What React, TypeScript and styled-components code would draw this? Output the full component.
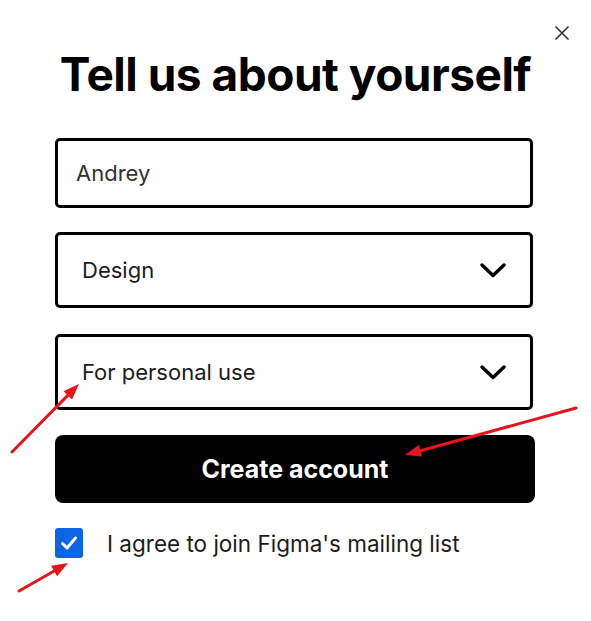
import React, { useState } from 'react';
import styled, { createGlobalStyle } from 'styled-components';

const GlobalStyle = createGlobalStyle`
  html, body {
    margin: 0;
    padding: 0;
    background: #ffffff;
  }
  body {
    font-family: Inter, "Liberation Sans", sans-serif;
    color: #000;
  }
`;

const Page = styled.div`
  position: relative;
  width: 591px;
  height: 621px;
  overflow: hidden;
  background: #fff;
`;

const Dialog = styled.div`
  display: flex;
  flex-direction: column;
  align-items: center;
  padding-top: 22px;
`;

const TopBar = styled.div`
  align-self: stretch;
  display: flex;
  justify-content: flex-end;
  padding-right: 18px;
  height: 22px;
`;

const CloseButton = styled.button`
  width: 22px;
  height: 22px;
  padding: 0;
  border: none;
  background: transparent;
  display: flex;
  align-items: center;
  justify-content: center;
  cursor: pointer;
`;

const Title = styled.h1`
  margin: 2px 0 0;
  font-size: 46px;
  line-height: 56px;
  font-weight: 700;
  letter-spacing: -0.5px;
  color: #000;
`;

const Form = styled.form`
  width: 478px;
  margin: 36px 3px 0 0;
  display: flex;
  flex-direction: column;
`;

const Field = styled.div<{ $height: number; $gap: number }>`
  box-sizing: border-box;
  height: ${(p) => p.$height}px;
  margin-top: ${(p) => p.$gap}px;
  border: 3px solid #000;
  border-radius: 5px;
  display: flex;
  align-items: center;
  justify-content: space-between;
  padding: 0 24px 0 ${(p) => (p.$height > 72 ? 24 : 18)}px;
`;

const FieldText = styled.span<{ $dark?: boolean }>`
  font-size: 22px;
  color: ${(p) => (p.$dark ? '#1c1c1c' : '#333333')};
`;

const SubmitButton = styled.button`
  margin-top: 25px;
  height: 68px;
  width: 480px;
  border: none;
  border-radius: 8px;
  background: #000;
  color: #fff;
  font-family: Inter, "Liberation Sans", sans-serif;
  font-size: 25px;
  font-weight: 700;
  cursor: pointer;
`;

const CheckRow = styled.label`
  margin-top: 25px;
  display: flex;
  align-items: center;
  gap: 24px;
  cursor: pointer;
`;

const CheckBox = styled.span<{ $checked: boolean }>`
  width: 28px;
  height: 30px;
  border-radius: 3px;
  background: ${(p) => (p.$checked ? '#0c66e4' : '#fff')};
  border: ${(p) => (p.$checked ? 'none' : '2px solid #000')};
  display: flex;
  align-items: center;
  justify-content: center;
`;

const CheckLabel = styled.span`
  font-size: 22.5px;
  color: #1c1c1c;
`;

const Annotations = styled.svg`
  position: absolute;
  left: 0;
  top: 0;
  pointer-events: none;
`;

const Chevron = () => (
  <svg width="26" height="15" viewBox="0 0 26 15">
    <path d="M2 2 L13 12.5 L24 2" fill="none" stroke="#000" strokeWidth="3.4" strokeLinecap="round" strokeLinejoin="round" />
  </svg>
);

const Arrow = ({ x1, y1, x2, y2 }: { x1: number; y1: number; x2: number; y2: number }) => {
  const a = Math.atan2(y2 - y1, x2 - x1);
  const len = 16;
  const w = 6;
  const bx = x2 - len * Math.cos(a);
  const by = y2 - len * Math.sin(a);
  const px = -Math.sin(a) * w;
  const py = Math.cos(a) * w;
  return (
    <g>
      <line x1={x1} y1={y1} x2={bx} y2={by} stroke="#e8141c" strokeWidth="3" strokeLinecap="round" />
      <polygon points={`${x2},${y2} ${bx + px},${by + py} ${bx - px},${by - py}`} fill="#e8141c" />
    </g>
  );
};

export default function App() {
  const [checked, setChecked] = useState(true);

  return (
    <Page>
      <GlobalStyle />
      <Dialog>
        <TopBar>
          <CloseButton type="button" aria-label="Close">
            <svg width="16" height="16" viewBox="0 0 16 16">
              <path d="M1.5 1.5 L14.5 14.5 M14.5 1.5 L1.5 14.5" stroke="#333" strokeWidth="1.6" />
            </svg>
          </CloseButton>
        </TopBar>
        <Title>Tell us about yourself</Title>
        <Form onSubmit={(e) => e.preventDefault()}>
          <Field $height={70} $gap={0}>
            <FieldText>Andrey</FieldText>
          </Field>
          <Field $height={76} $gap={24}>
            <FieldText $dark>Design</FieldText>
            <Chevron />
          </Field>
          <Field $height={76} $gap={26}>
            <FieldText $dark>For personal use</FieldText>
            <Chevron />
          </Field>
          <SubmitButton type="submit">Create account</SubmitButton>
          <CheckRow onClick={() => setChecked(!checked)}>
            <CheckBox $checked={checked}>
              {checked && (
                <svg width="18" height="16" viewBox="0 0 18 16">
                  <path d="M2.5 8.5 L7 13 L15.5 3" fill="none" stroke="#fff" strokeWidth="3" strokeLinecap="round" strokeLinejoin="round" />
                </svg>
              )}
            </CheckBox>
            <CheckLabel>I agree to join Figma's mailing list</CheckLabel>
          </CheckRow>
        </Form>
      </Dialog>
      <Annotations width="591" height="621" viewBox="0 0 591 621">
        <Arrow x1={12} y1={452} x2={79} y2={384} />
        <Arrow x1={576} y1={408} x2={405} y2={455} />
        <Arrow x1={19} y1={591} x2={68} y2={563} />
      </Annotations>
    </Page>
  );
}
